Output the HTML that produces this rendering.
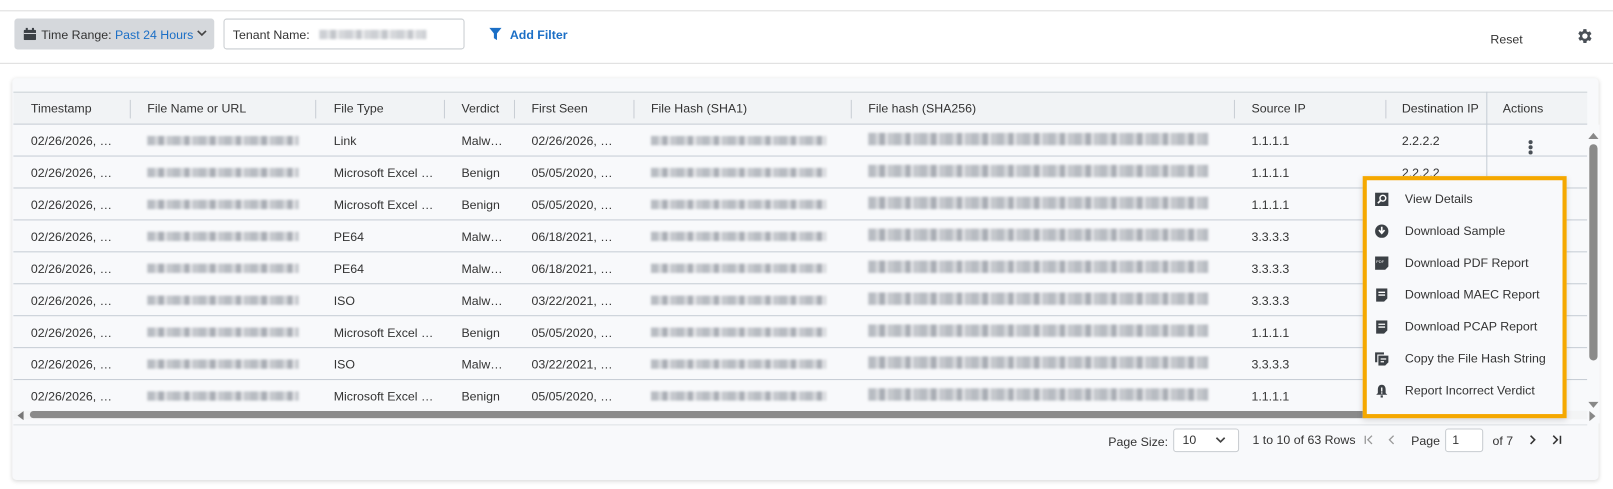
<!DOCTYPE html>
<html><head><meta charset="utf-8"><style>
*{box-sizing:border-box;margin:0;padding:0}
html,body{width:1613px;height:489px;overflow:hidden;background:#fff;font-family:"Liberation Sans",sans-serif;color:#333}
#w{position:absolute;left:0;top:0;width:1566px;height:475px;transform:scale(1.03);transform-origin:0 0}
.a{position:absolute;white-space:nowrap}
.t{font-size:12px;line-height:14px}
.blur{position:absolute;height:9px;filter:blur(1.2px);background:repeating-linear-gradient(90deg,#b8bcc2 0 7px,#d4d6da 7px 11px,#a9adb4 11px 16px,#e2e3e6 16px 19px,#c4c7cc 19px 25px)}
.row{position:absolute;left:13px;width:1528px;height:31px;border-bottom:1px solid #c6cdd5}
.sep{position:absolute;top:97px;width:1px;height:18px;background:#c9ced4}
.ic{position:absolute;left:1335px;width:13px;height:13px}
</style></head><body><div id="w">
<div class="a" style="left:0;top:10px;width:1566px;height:1px;background:#ddd"></div>
<div class="a" style="left:14px;top:18px;width:194px;height:30px;background:#d5d8dc;border-radius:3px"></div>
<svg class="a" style="left:23px;top:27px" width="12" height="12" viewBox="0 0 12 12"><rect x="0" y="2" width="12" height="10" rx="1" fill="#3c4146"/><rect x="0" y="5" width="12" height="1" fill="#d5d8dc"/><rect x="2" y="0" width="2" height="3" fill="#3c4146"/><rect x="8" y="0" width="2" height="3" fill="#3c4146"/></svg>
<div class="a t" style="left:40px;top:27px;font-size:12px">Time Range: <span style="color:#1b6fc6">Past 24 Hours</span></div>
<svg class="a" style="left:191px;top:29px" width="10" height="7" viewBox="0 0 10 7"><path d="M1 1l4 4 4-4" stroke="#444" stroke-width="1.6" fill="none"/></svg>
<div class="a" style="left:217px;top:18px;width:234px;height:30px;border:1px solid #c8ccd0;border-radius:3px;background:#fff"></div>
<div class="a t" style="left:226px;top:27px;font-size:12px">Tenant Name:</div>
<div class="blur" style="left:310px;top:29px;width:104px;opacity:.7"></div>
<svg class="a" style="left:475px;top:27px" width="12" height="12" viewBox="0 0 12 12"><path d="M0 0h12L7.5 5.5V12L4.5 10V5.5z" fill="#1b6fc6"/></svg>
<div class="a t" style="left:495px;top:27px;color:#1b6fc6;font-weight:bold;font-size:12px">Add Filter</div>
<div class="a t" style="left:1447px;top:31px;font-size:12px">Reset</div>
<svg class="a" style="left:1529px;top:26px" width="18" height="18" viewBox="0 0 24 24"><path fill="#4a5057" d="M19.4 13a7.5 7.5 0 000-2l2.1-1.6-2-3.5-2.5 1a7.6 7.6 0 00-1.7-1L15 3h-4l-.4 2.6a7.6 7.6 0 00-1.7 1l-2.5-1-2 3.5L6.6 11a7.5 7.5 0 000 2l-2.1 1.6 2 3.5 2.5-1a7.6 7.6 0 001.7 1L11 21h4l.4-2.6a7.6 7.6 0 001.7-1l2.5 1 2-3.5zM13 15.5A3.5 3.5 0 1113 8.5a3.5 3.5 0 010 7z"/></svg>
<div class="a" style="left:0;top:61px;width:1566px;height:1px;background:#ddd"></div>
<div class="a" style="left:12px;top:76px;width:1540px;height:390px;background:#f8f9fb;border-radius:4px;box-shadow:0 1px 4px rgba(0,0,0,.15)"></div>
<div class="a" style="left:13px;top:89px;width:1528px;height:32px;background:#f1f3f5;border-top:1px solid #ccd2d8;border-bottom:1px solid #c6cdd5"></div>
<div class="a t" style="left:30px;top:98px">Timestamp</div>
<div class="a t" style="left:143px;top:98px">File Name or URL</div>
<div class="a t" style="left:324px;top:98px">File Type</div>
<div class="a t" style="left:448px;top:98px">Verdict</div>
<div class="a t" style="left:516px;top:98px">First Seen</div>
<div class="a t" style="left:632px;top:98px">File Hash (SHA1)</div>
<div class="a t" style="left:843px;top:98px">File hash (SHA256)</div>
<div class="a t" style="left:1215px;top:98px">Source IP</div>
<div class="a t" style="left:1361px;top:98px">Destination IP</div>
<div class="a t" style="left:1459px;top:98px">Actions</div>
<div class="sep" style="left:126px"></div><div class="sep" style="left:306px"></div><div class="sep" style="left:431px"></div><div class="sep" style="left:499px"></div><div class="sep" style="left:615px"></div><div class="sep" style="left:826px"></div><div class="sep" style="left:1198px"></div><div class="sep" style="left:1345px"></div>
<div class="a" style="left:1443px;top:89px;width:1px;height:310px;background:#c6cdd5"></div>
<div id="rows"></div>
<script>
var d=[["Link","Malw…","02/26/2026, …","1.1.1.1","2.2.2.2"],["Microsoft Excel …","Benign","05/05/2020, …","1.1.1.1","2.2.2.2"],["Microsoft Excel …","Benign","05/05/2020, …","1.1.1.1",""],["PE64","Malw…","06/18/2021, …","3.3.3.3",""],["PE64","Malw…","06/18/2021, …","3.3.3.3",""],["ISO","Malw…","03/22/2021, …","3.3.3.3",""],["Microsoft Excel …","Benign","05/05/2020, …","1.1.1.1",""],["ISO","Malw…","03/22/2021, …","3.3.3.3",""],["Microsoft Excel …","Benign","05/05/2020, …","1.1.1.1",""]];
var h="";for(var i=0;i<9;i++){var y=121+i*31,r=d[i];
h+='<div class="row" style="top:'+y+'px"></div>';
var ty=y+9;
h+='<div class="a t" style="left:30px;top:'+ty+'px">02/26/2026, …</div>';
h+='<div class="blur" style="left:143px;top:'+(y+11)+'px;width:147px"></div>';
h+='<div class="a t" style="left:324px;top:'+ty+'px">'+r[0]+'</div>';
h+='<div class="a t" style="left:448px;top:'+ty+'px">'+r[1]+'</div>';
h+='<div class="a t" style="left:516px;top:'+ty+'px">'+r[2]+'</div>';
h+='<div class="blur" style="left:632px;top:'+(y+11)+'px;width:170px"></div>';
h+='<div class="blur" style="left:843px;top:'+(y+8)+'px;width:330px;height:12px"></div>';
h+='<div class="a t" style="left:1215px;top:'+ty+'px">'+r[3]+'</div>';
h+='<div class="a t" style="left:1361px;top:'+ty+'px">'+r[4]+'</div>';}
document.getElementById("rows").innerHTML=h;
</script>
<div class="a" style="left:1484px;top:136px;width:4px;height:4px;border-radius:2px;background:#4a5057;box-shadow:0 5px 0 #4a5057,0 10px 0 #4a5057"></div>
<div class="a" style="left:1541px;top:121px;width:12px;height:290px;background:#f8f9fb"></div>
<svg class="a" style="left:1542px;top:128px" width="10" height="7"><path d="M0 7L5 1 10 7z" fill="#888"/></svg>
<div class="a" style="left:1543px;top:140px;width:8px;height:210px;background:#8a8a8a;border-radius:4px"></div>
<svg class="a" style="left:1542px;top:390px" width="10" height="7"><path d="M0 0L5 6 10 0z" fill="#888"/></svg>
<svg class="a" style="left:1543px;top:399px" width="7" height="10"><path d="M0 0L6 5 0 10z" fill="#888"/></svg>
<div class="a" style="left:13px;top:399px;width:1528px;height:8px;background:#f3f4f5"></div>
<svg class="a" style="left:16px;top:399px" width="7" height="9"><path d="M7 0L1 4.5 7 9z" fill="#777"/></svg>
<div class="a" style="left:29px;top:399px;width:1300px;height:7px;background:#8a8a8a;border-radius:4px"></div>
<div class="a" style="left:13px;top:412px;width:1528px;height:1px;background:#dde1e5"></div>
<div class="a t" style="left:1076px;top:422px">Page Size:</div>
<div class="a" style="left:1139px;top:416px;width:64px;height:23px;border:1px solid #c8ccd0;border-radius:3px;background:#fff"></div>
<div class="a t" style="left:1148px;top:420px">10</div>
<svg class="a" style="left:1180px;top:424px" width="10" height="7"><path d="M1 1l4 4 4-4" stroke="#444" stroke-width="1.6" fill="none"/></svg>
<div class="a t" style="left:1216px;top:420px">1 to 10 of 63 Rows</div>
<svg class="a" style="left:1324px;top:422px" width="10" height="10"><path d="M1.5 1v8M8 1L4 5l4 4" stroke="#999" stroke-width="1.3" fill="none"/></svg>
<svg class="a" style="left:1347px;top:422px" width="8" height="10"><path d="M6 1L2 5l4 4" stroke="#999" stroke-width="1.3" fill="none"/></svg>
<div class="a t" style="left:1370px;top:421px">Page</div>
<div class="a" style="left:1403px;top:416px;width:37px;height:23px;border:1px solid #c8ccd0;border-radius:3px;background:#fff"></div>
<div class="a t" style="left:1410px;top:420px">1</div>
<div class="a t" style="left:1449px;top:421px">of 7</div>
<svg class="a" style="left:1484px;top:422px" width="8" height="10"><path d="M2 1l4 4-4 4" stroke="#333" stroke-width="1.5" fill="none"/></svg>
<svg class="a" style="left:1506px;top:422px" width="11" height="10"><path d="M2 1l4 4-4 4M9 1v8" stroke="#333" stroke-width="1.5" fill="none"/></svg>
<div class="a" style="left:1323px;top:171px;width:198px;height:235px;border:4px solid #f5a800;background:#f8f9fb;box-shadow:0 2px 6px rgba(0,0,0,.15)"></div>
<svg class="ic" style="top:187px" viewBox="0 0 12 12"><path d="M0 0h12v12H0z" fill="#3c4146"/><circle cx="7" cy="5" r="2.6" stroke="#fff" stroke-width="1.3" fill="none"/><path d="M5 7L2.5 9.5" stroke="#fff" stroke-width="1.5"/></svg>
<div class="a" style="left:1364px;top:186px;font-size:12px">View Details</div>
<svg class="ic" style="top:218px" viewBox="0 0 12 12"><circle cx="6" cy="6" r="6" fill="#3c4146"/><path d="M6 2v5M3.5 5l2.5 2.8L8.5 5" stroke="#fff" stroke-width="1.5" fill="none"/></svg>
<div class="a" style="left:1364px;top:217px;font-size:12px">Download Sample</div>
<svg class="ic" style="top:249px" viewBox="0 0 12 12"><path d="M0 0h12v9l-3 3H0z" fill="#3c4146"/><text x="1" y="6" font-size="3.5" fill="#fff" font-family="Liberation Sans">PDF</text></svg>
<div class="a" style="left:1364px;top:248px;font-size:12px">Download PDF Report</div>
<svg class="ic" style="top:280px" viewBox="0 0 12 12"><path d="M1 0h10v9l-3 3H1z" fill="#3c4146"/><path d="M3 3.5h6M3 6h6" stroke="#fff" stroke-width="1.2"/></svg>
<div class="a" style="left:1364px;top:279px;font-size:12px">Download MAEC Report</div>
<svg class="ic" style="top:311px" viewBox="0 0 12 12"><path d="M1 0h10v9l-3 3H1z" fill="#3c4146"/><path d="M3 3.5h6M3 6h6" stroke="#fff" stroke-width="1.2"/></svg>
<div class="a" style="left:1364px;top:310px;font-size:12px">Download PCAP Report</div>
<svg class="ic" style="top:342px" viewBox="0 0 12 12"><path d="M0 0h8v2H2v7H0z" fill="#3c4146"/><path d="M3 3h9v6l-3 3H3z" fill="#3c4146"/><path d="M5 6h5M5 8.5h3" stroke="#fff" stroke-width="1.1"/></svg>
<div class="a" style="left:1364px;top:341px;font-size:12px">Copy the File Hash String</div>
<svg class="ic" style="top:373px" viewBox="0 0 12 12"><path d="M6 0.5C3.5 0.5 2.5 2.5 2.5 5v3L1 9.5h10L9.5 8V5C9.5 2.5 8.5.5 6 .5z" fill="#3c4146"/><rect x="5" y="10" width="2" height="2" fill="#3c4146"/><path d="M6 3v3.5" stroke="#fff" stroke-width="1.2"/><rect x="5.4" y="7.3" width="1.2" height="1.2" fill="#fff"/></svg>
<div class="a" style="left:1364px;top:372px;font-size:12px">Report Incorrect Verdict</div>
</div></body></html>
